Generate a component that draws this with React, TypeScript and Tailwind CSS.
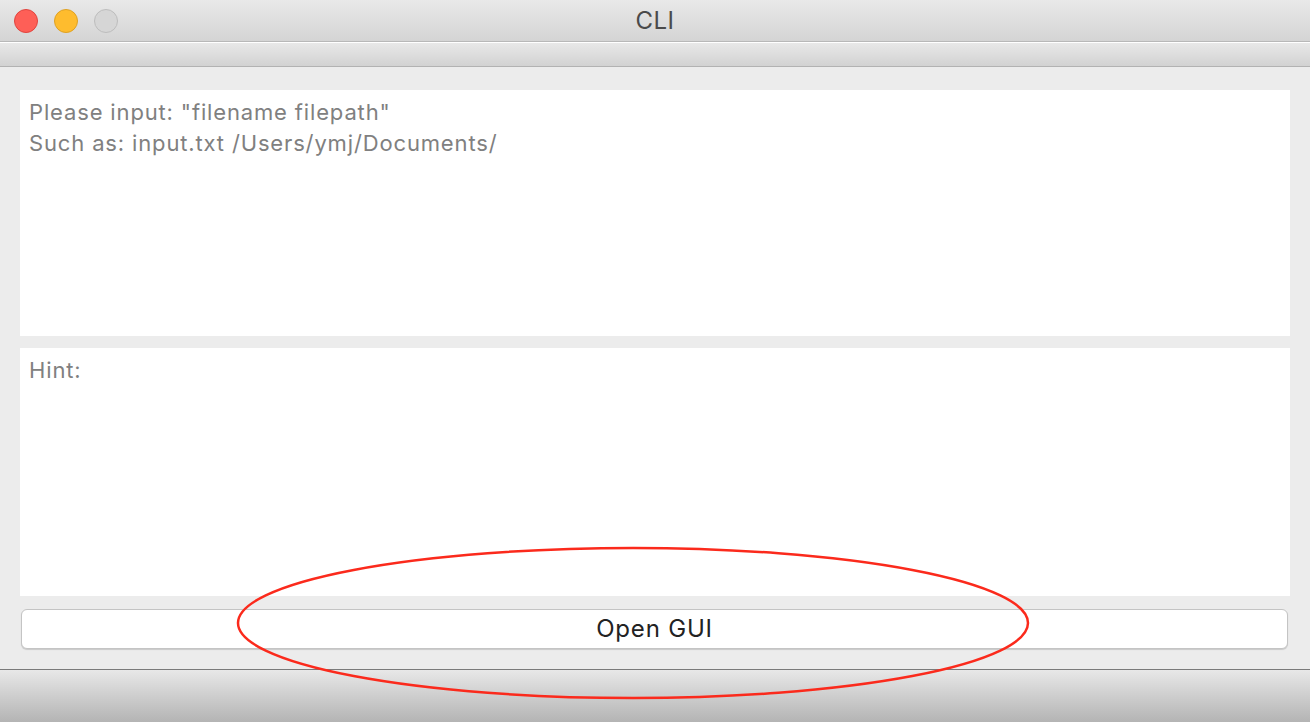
import React from "react";

const TrafficLights = () => (
  <div className="flex items-center gap-4 pl-[14px]">
    <div className="w-6 h-6 rounded-full bg-[#fe5f57] border border-[#e0443e]" />
    <div className="w-6 h-6 rounded-full bg-[#febc2e] border border-[#dea123]" />
    <div className="w-6 h-6 rounded-full bg-[#d6d6d6] border border-[#bdbdbd]" />
  </div>
);

const App = () => {
  return (
    <div
      className="relative w-[1310px] h-[722px] flex flex-col bg-[#ececec] overflow-hidden"
      style={{ fontFamily: "Inter, 'Liberation Sans', sans-serif" }}
    >
      {/* title bar */}
      <div className="relative h-[42px] flex items-center bg-gradient-to-b from-[#e9e9e9] to-[#d4d4d4] border-b border-[#b8b8b8]">
        <TrafficLights />
        <div className="absolute inset-0 flex items-center justify-center text-[24px] tracking-[0.5px] text-[#4a4a4a]">CLI</div>
      </div>
      <div className="h-[25px] bg-gradient-to-b from-[#e8e8e8] to-[#d2d2d2] border-t border-white border-b border-b-[#b2b2b2]" />

      {/* content */}
      <div className="flex-1 flex flex-col px-5 pt-[23px]">
        <div className="h-[246px] bg-white px-[9px] pt-[7px] text-[22px] leading-[31px] tracking-[0.85px] text-[#808080]">
          <div>Please input: "filename filepath"</div>
          <div>Such as: input.txt /Users/ymj/Documents/</div>
        </div>
        <div className="mt-3 h-[248px] bg-white px-[9px] pt-[7px] text-[22px] leading-[31px] tracking-[0.85px] text-[#808080]">
          Hint:
        </div>
        <div className="mt-[13px] ml-[1px] mr-[2px] h-10 rounded-md bg-white border border-[#c4c4c4] shadow-[0_1px_1px_rgba(0,0,0,0.15)] flex items-center justify-center text-[24px] tracking-[0.8px] text-[#222]">
          Open GUI
        </div>
      </div>

      {/* bottom bar */}
      <div className="h-[53px] mt-[20px] bg-gradient-to-b from-[#e8e8e8] to-[#b4b4b4] border-t border-[#7a7a7a]" />

      {/* annotation */}
      <svg className="absolute left-0 top-0 pointer-events-none" width="1310" height="722">
        <ellipse cx="633" cy="623" rx="395" ry="75" fill="none" stroke="#fb2a1c" strokeWidth="2.5" />
      </svg>
    </div>
  );
};

export default App;
